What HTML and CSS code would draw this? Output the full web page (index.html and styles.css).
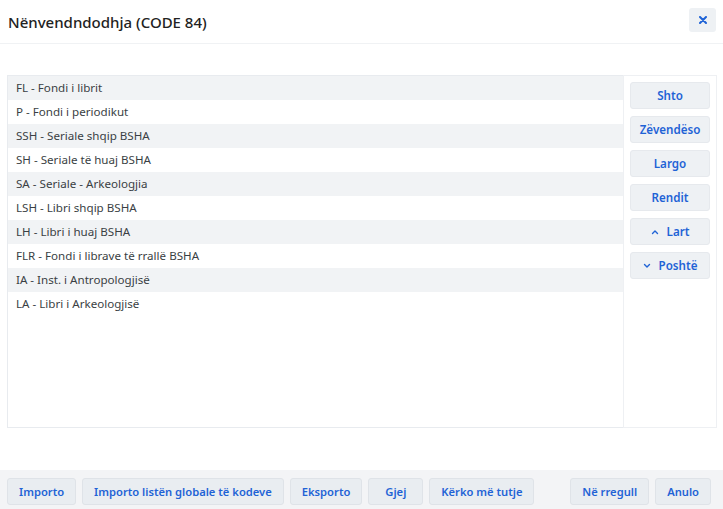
FILE: index.html
```html
<!DOCTYPE html>
<html lang="sq">
<head>
  <meta charset="UTF-8">
  <title>Nënvendndodhja (CODE 84)</title>
  <link rel="stylesheet" href="styles.css">
</head>
<body>
  <div class="dialog">
    <!-- titulli -->
    <header class="dlg-head">
      <h1>Nënvendndodhja (CODE 84)</h1>
      <button class="close-btn" aria-label="Mbyll">
        <svg width="8" height="8" viewBox="0 0 8 8"><path d="M1 1L7 7M7 1L1 7" stroke="#1f63d6" stroke-width="2" stroke-linecap="round"/></svg>
      </button>
    </header>

    <!-- lista + veprimet -->
    <div class="dlg-body">
      <ul class="code-list">
        <li>FL - Fondi i librit</li>
        <li>P - Fondi i periodikut</li>
        <li>SSH - Seriale shqip BSHA</li>
        <li>SH - Seriale të huaj BSHA</li>
        <li>SA - Seriale - Arkeologjia</li>
        <li>LSH - Libri shqip BSHA</li>
        <li>LH - Libri i huaj BSHA</li>
        <li>FLR - Fondi i librave të rrallë BSHA</li>
        <li>IA - Inst. i Antropologjisë</li>
        <li>LA - Libri i Arkeologjisë</li>
      </ul>
      <div class="side-actions">
        <button class="btn">Shto</button>
        <button class="btn">Zëvendëso</button>
        <button class="btn">Largo</button>
        <button class="btn">Rendit</button>
        <button class="btn">
          <svg width="8" height="6" viewBox="0 0 8 6"><path d="M1.5 4.5L4 2L6.5 4.5" fill="none" stroke="#1f63d6" stroke-width="1.4" stroke-linecap="round" stroke-linejoin="round"/></svg>
          Lart
        </button>
        <button class="btn">
          <svg width="8" height="6" viewBox="0 0 8 6"><path d="M1.5 1.5L4 4L6.5 1.5" fill="none" stroke="#1f63d6" stroke-width="1.4" stroke-linecap="round" stroke-linejoin="round"/></svg>
          Poshtë
        </button>
      </div>
    </div>

    <!-- fundi -->
    <footer class="dlg-foot">
      <button class="btn">Importo</button>
      <button class="btn">Importo listën globale të kodeve</button>
      <button class="btn">Eksporto</button>
      <button class="btn">Gjej</button>
      <button class="btn">Kërko më tutje</button>
      <span class="spacer"></span>
      <button class="btn">Në rregull</button>
      <button class="btn">Anulo</button>
    </footer>
  </div>
</body>
</html>
```

FILE: styles.css
```css
:root {
  --color-text: #2b2f33;
  --color-blue: #1f63d6;
  --color-line: #e8ebef;
  --color-stripe: #f1f3f5;
  --color-btn: #eef1f4;
  --font-base: 'Noto Sans', 'Open Sans', Arial, sans-serif;
}
*, *::before, *::after { box-sizing: border-box; }
body {
  margin: 0;
  font-family: var(--font-base);
  color: var(--color-text);
  background: #fff;
}
.dialog {
  width: 723px; height: 509px;
  display: flex; flex-direction: column;
}

/* titulli */
.dlg-head {
  height: 44px;
  display: flex; align-items: center; justify-content: space-between;
  padding: 0 7px 0 8px;
  border-bottom: 1px solid #f0f2f4;
}
.dlg-head h1 {
  margin: 0;
  font-size: 15px; font-weight: 500;
  color: #222;
}
.close-btn {
  width: 27px; height: 24px;
  margin-top: -4px;
  border: none; border-radius: 3px;
  background: var(--color-btn);
  display: flex; align-items: center; justify-content: center;
  padding: 0;
}

/* lista */
.dlg-body {
  display: flex;
  margin: 31px 6px 0 7px;
  height: 353px;
}
.code-list {
  flex: 1;
  margin: 0; padding: 0;
  list-style: none;
  border: 1px solid var(--color-line);
  border-right: none;
}
.code-list li {
  height: 24px; line-height: 24px;
  padding-left: 8px;
  font-size: 11.6px;
  color: #3a3f44;
}
.code-list li:nth-child(odd) { background: var(--color-stripe); }

.side-actions {
  width: 94px;
  border: 1px solid #eef0f3;
  padding: 6px 6px 0 6px;
  display: flex; flex-direction: column; gap: 7px;
}

/* butonat */
.btn {
  height: 27px;
  min-width: 55px;
  border: 1px solid #e6e9ed;
  border-radius: 3px;
  background: var(--color-btn);
  color: var(--color-blue);
  font-family: var(--font-base);
  font-size: 11.2px; font-weight: 600;
  padding: 0 11px;
  display: inline-flex; align-items: center; justify-content: center; gap: 8px;
  white-space: nowrap;
}
.side-actions .btn { width: 80px; padding: 0; font-size: 11.6px; }

/* fundi */
.dlg-foot {
  margin-top: auto;
  height: 39px;
  background: #f3f4f6;
  display: flex; align-items: flex-start; gap: 6px;
  padding: 8px 12px 0 7px;
}
.dlg-foot .btn {
  height: 27px;
  background: #e9edf1;
  border-color: #dfe3e8;
}
.spacer { flex: 1; }
```
